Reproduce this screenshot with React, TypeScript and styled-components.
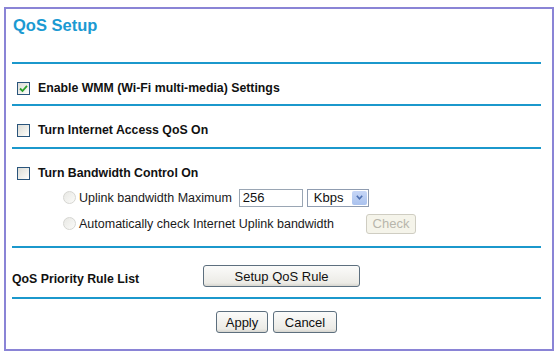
import React from 'react'
import styled, { createGlobalStyle } from 'styled-components'

const GlobalStyle = createGlobalStyle`
  body {
    margin: 0;
    background: #ffffff;
    font-family: 'Liberation Sans', Arial, sans-serif;
  }
`

const Panel = styled.div`
  box-sizing: border-box;
  margin: 7px 0 0 4px;
  width: 550px;
  height: 344px;
  border: 2px solid #8a84d6;
  display: flex;
  flex-direction: column;
`

const Title = styled.h1`
  margin: 0;
  height: 53px;
  padding: 6px 0 0 7px;
  box-sizing: border-box;
  font-size: 16.5px;
  line-height: 20px;
  font-weight: bold;
  color: #1b9ad2;
`

const Divider = styled.div`
  flex: none;
  width: 529px;
  height: 2px;
  margin-left: 6px;
  background: #1b98cc;
`

const Section = styled.div<{ $top: number; $height: number }>`
  box-sizing: border-box;
  height: ${(p) => p.$height}px;
  padding-top: ${(p) => p.$top}px;
  display: flex;
  flex-direction: column;
`

const Row = styled.div<{ $indent?: number; $h?: number }>`
  display: flex;
  align-items: center;
  height: ${(p) => p.$h ?? 25}px;
  padding-left: ${(p) => p.$indent ?? 11}px;
  font-size: 12px;
  color: #111;
`

const BoldLabel = styled.span<{ $gap?: number }>`
  font-weight: bold;
  font-size: 12.3px;
  margin-left: ${(p) => p.$gap ?? 8}px;
`

const Label = styled.span`
  font-size: 12.5px;
  margin-left: 3px;
  color: #1a1a1a;
`

const Box = styled.span`
  box-sizing: border-box;
  width: 13px;
  height: 13px;
  border: 1px solid #2a557c;
  background: linear-gradient(135deg, #dcdcd6 0%, #f4f4f0 70%, #ffffff 100%);
  display: inline-flex;
  align-items: center;
  justify-content: center;
`

const Radio = styled.span`
  box-sizing: border-box;
  width: 13px;
  height: 13px;
  border-radius: 50%;
  border: 1px solid #d6d6d2;
  background: linear-gradient(135deg, #e8e8e4, #fbfbf9);
`

const TextInput = styled.div`
  box-sizing: border-box;
  width: 64px;
  height: 18px;
  margin-left: 7px;
  border: 1px solid #9aa6b4;
  padding: 0 3px;
  font-size: 13px;
  line-height: 16px;
  color: #111;
`

const Select = styled.div`
  box-sizing: border-box;
  width: 62px;
  height: 18px;
  margin-left: 4px;
  border: 1px solid #8f9cb0;
  display: flex;
  align-items: center;
  justify-content: space-between;
  padding-left: 6px;
  font-size: 13px;
  color: #111;
`

const SelectArrow = styled.span`
  width: 15px;
  height: 14px;
  margin-right: 1px;
  background: linear-gradient(#c6d6f6, #aac2ee);
  border-radius: 2px;
  display: inline-flex;
  align-items: center;
  justify-content: center;
`

const Button = styled.button<{ $w: number; $disabled?: boolean }>`
  box-sizing: border-box;
  width: ${(p) => p.$w}px;
  height: ${(p) => (p.$disabled ? 20 : 22)}px;
  padding: 0;
  border: 1px solid ${(p) => (p.$disabled ? '#cfcdc2' : '#5d6f7e')};
  border-radius: 3px;
  background: ${(p) =>
    p.$disabled ? '#f5f4ea' : 'linear-gradient(#fbfbfa, #ecebe6 85%, #d6d5cf)'};
  color: ${(p) => (p.$disabled ? '#b8b6ac' : '#111')};
  font-family: 'Liberation Sans', Arial, sans-serif;
  font-size: 13px;
`

const Spacer = styled.div<{ $w: number }>`
  width: ${(p) => p.$w}px;
  flex: none;
`

const Actions = styled.div`
  display: flex;
  gap: 5px;
  padding-left: 210px;
`

const Check = () => (
  <svg width="9" height="9" viewBox="0 0 9 9">
    <path d="M1 4.5 L3.5 7 L8 1.8" fill="none" stroke="#2aa02a" strokeWidth="1.8" />
  </svg>
)

const Checkbox = ({ checked }: { checked?: boolean }) => <Box>{checked && <Check />}</Box>

const App = () => {
  return (
    <>
      <GlobalStyle />
      <Panel>
        <Title>QoS Setup</Title>
        <Divider />
        <Section $top={12} $height={40}>
          <Row $h={24}>
            <Checkbox checked />
            <BoldLabel>Enable WMM (Wi-Fi multi-media) Settings</BoldLabel>
          </Row>
        </Section>
        <Divider />
        <Section $top={12} $height={41}>
          <Row $h={24}>
            <Checkbox />
            <BoldLabel>Turn Internet Access QoS On</BoldLabel>
          </Row>
        </Section>
        <Divider />
        <Section $top={12} $height={97}>
          <Row $h={24}>
            <Checkbox />
            <BoldLabel>Turn Bandwidth Control On</BoldLabel>
          </Row>
          <Row $indent={57}>
            <Radio />
            <Label>Uplink bandwidth Maximum</Label>
            <TextInput>256</TextInput>
            <Select>
              Kbps
              <SelectArrow>
                <svg width="7" height="5" viewBox="0 0 7 5">
                  <path d="M0.8 0.8 L3.5 3.8 L6.2 0.8" fill="none" stroke="#4d6fb0" strokeWidth="1.6" />
                </svg>
              </SelectArrow>
            </Select>
          </Row>
          <Row $indent={57} $h={27}>
            <Radio />
            <Label>Automatically check Internet Uplink bandwidth</Label>
            <Spacer $w={32} />
            <Button $w={50} $disabled>
              Check
            </Button>
          </Row>
        </Section>
        <Divider />
        <Section $top={16} $height={49}>
          <Row $indent={6} $h={24}>
            <BoldLabel $gap={0} style={{ paddingTop: 5 }}>
              QoS Priority Rule List
            </BoldLabel>
            <Spacer $w={64} />
            <Button $w={157}>Setup QoS Rule</Button>
          </Row>
        </Section>
        <Divider />
        <Section $top={12} $height={50}>
          <Actions>
            <Button $w={52}>Apply</Button>
            <Button $w={64}>Cancel</Button>
          </Actions>
        </Section>
      </Panel>
    </>
  )
}

export default App
